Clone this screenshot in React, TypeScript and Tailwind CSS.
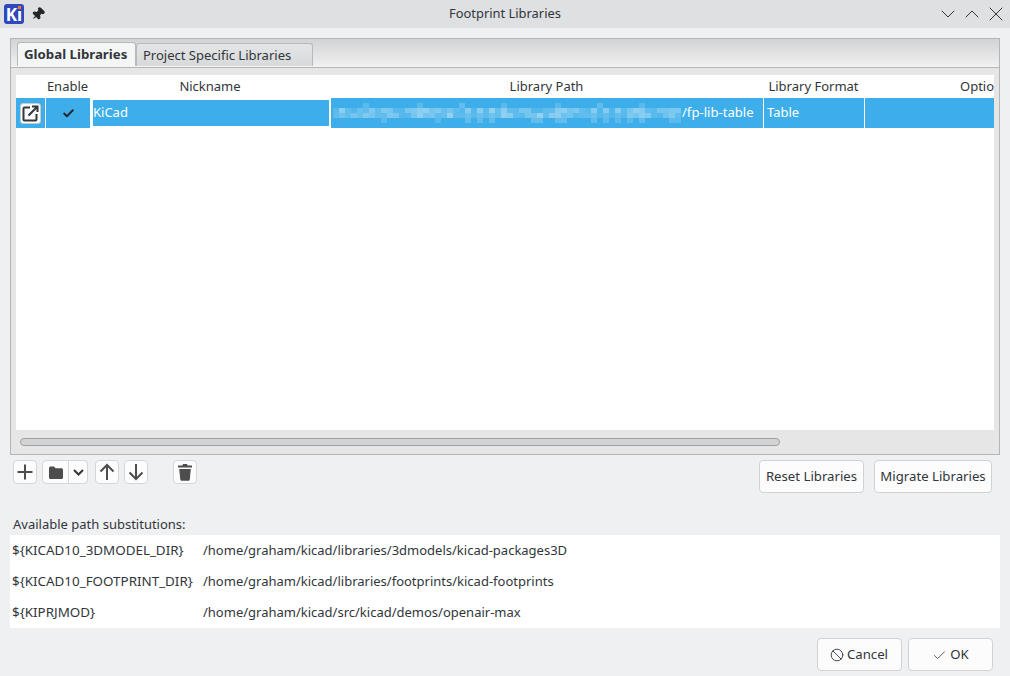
import { Ban, Check, ChevronDown, ChevronUp, X, Pin } from "lucide-react"

const columns = [
  { label: "", width: "w-[29px]" },
  { label: "Enable", width: "w-[45px]" },
  { label: "Nickname", width: "w-[240px]" },
  { label: "Library Path", width: "w-[433px]" },
  { label: "Library Format", width: "w-[101px]" },
]

const substitutions = [
  ["${KICAD10_3DMODEL_DIR}", "/home/graham/kicad/libraries/3dmodels/kicad-packages3D"],
  ["${KICAD10_FOOTPRINT_DIR}", "/home/graham/kicad/libraries/footprints/kicad-footprints"],
  ["${KIPRJMOD}", "/home/graham/kicad/src/kicad/demos/openair-max"],
]

const toolBtn = "flex h-6 items-center justify-center rounded-[4px] border border-[#d5d6d8] bg-[#fcfcfc]"
const textBtn = "flex h-[33px] items-center justify-center rounded-[4px] border border-[#d1d2d4] bg-[#fcfcfc] pt-px text-[13.2px]"

// the redacted part of the path: rough pixel blocks
function Redacted() {
  const blocks = []
  for (let i = 0; i < 58; i++) {
    for (let r = 0; r < 4; r++) {
      const n = (i * i * 29 + i * 47 + r * 71 + (i % 7) * r * 11) % 23
      const o = r === 1 || r === 2 ? 0.12 + n / 70 : n > 15 ? n / 110 : 0
      blocks.push(<rect key={i + "-" + r} x={i * 6} y={r * 5} width="6" height="5" fill="#ffffff" opacity={o} />)
    }
  }
  return (
    <svg width="349" height="20" className="shrink-0">
      {blocks}
    </svg>
  )
}

function OpenIcon() {
  return (
    <svg width="17" height="17" viewBox="0 0 17 17" fill="none" stroke="#31363b" strokeWidth="2">
      <path d="M8 2.5H2.5a1 1 0 0 0-1 1v11a1 1 0 0 0 1 1h11a1 1 0 0 0 1-1V9" />
      <path d="M6.5 10.5 15 2M10 1.5h5.5V7" />
    </svg>
  )
}

function PlusIcon() {
  return (
    <svg width="18" height="18" viewBox="0 0 18 18" stroke="#4d4d4d" strokeWidth="2">
      <path d="M9 1.5v15M1.5 9h15" />
    </svg>
  )
}

function FolderIcon() {
  return (
    <svg width="16" height="15" viewBox="0 0 16 15" fill="#4d4d4d">
      <path d="M1 3a1.5 1.5 0 0 1 1.5-1.5h3.4L7.6 3.2h6A1.5 1.5 0 0 1 15 4.7v7.8a1.5 1.5 0 0 1-1.5 1.5h-11A1.5 1.5 0 0 1 1 12.5z" />
    </svg>
  )
}

function SmallChevron() {
  return (
    <svg width="11" height="7" viewBox="0 0 11 7" fill="none" stroke="#31363b" strokeWidth="2">
      <path d="M1 1l4.5 4.5L10 1" />
    </svg>
  )
}

function ArrowIcon({ up }: { up: boolean }) {
  return (
    <svg width="16" height="18" viewBox="0 0 16 18" fill="none" stroke="#4d4d4d" strokeWidth="2">
      <path d={up ? "M8 17V2M1.5 8.5 8 2l6.5 6.5" : "M8 1v15M1.5 9.5 8 16l6.5-6.5"} />
    </svg>
  )
}

function TrashIcon() {
  return (
    <svg width="14" height="17" viewBox="0 0 14 17" fill="#4d4d4d">
      <path d="M5 0h4l.6 1.5H14V3.5H0V1.5h4.4z" />
      <path d="M1.2 5h11.6l-1 10.6a1.3 1.3 0 0 1-1.3 1.2h-6.9a1.3 1.3 0 0 1-1.3-1.2z" />
    </svg>
  )
}

export default function App() {
  return (
    <div className="flex h-[676px] w-[1010px] flex-col overflow-hidden bg-[#eff0f1] text-[13px] text-[#31363b] [font-family:'Noto_Sans',sans-serif]">
      {/* Title bar */}
      <div className="grid h-7 shrink-0 grid-cols-[1fr_auto_1fr] items-center bg-[#dee0e2] pl-1 pr-[2px]">
        <div className="flex items-center">
          <div className="relative flex h-5 w-5 items-center justify-center rounded-[3px] bg-[#2f49bd] text-[17px] font-bold leading-none text-white">
            Kı
            <span className="absolute right-[3px] top-[2px] h-[3px] w-[3px] bg-[#f2811d]" />
          </div>
          <Pin className="ml-[7px] h-[14px] w-[14px] rotate-45 fill-[#232629] text-[#232629]" />
        </div>
        <span className="pr-[2px] text-[12.9px]">Footprint Libraries</span>
        <div className="flex items-center justify-end">
          <ChevronDown className="h-6 w-6" strokeWidth={1} />
          <ChevronUp className="h-6 w-6" strokeWidth={1} />
          <X className="h-6 w-6" strokeWidth={1} />
        </div>
      </div>

      {/* Notebook */}
      <div className="mx-[10px] mt-[10px] flex h-[417px] shrink-0 flex-col border border-[#b4b5b6] bg-[#e6e6e6]">
        <div className="flex h-[27px] shrink-0 items-end bg-gradient-to-b from-[#d2d3d4] to-[#f0f0f1] pl-[6px]">
          <div className="flex h-[24px] w-[119px] items-center rounded-t-[3px] border border-b-0 border-[#b8b9ba] bg-[#f4f5f5] pl-[6px] pt-px text-[13.25px] font-bold">
            Global Libraries
          </div>
          <div className="flex h-[23px] w-[177px] items-center rounded-t-[3px] border border-b-0 border-[#b8b9ba] bg-gradient-to-b from-[#e4e5e6] to-[#d8d9da] pl-[6px] pt-px">
            Project Specific Libraries
          </div>
        </div>
        <div className="h-px shrink-0 bg-[#f4f5f5]" />
        <div className="flex min-h-0 flex-1 flex-col border-t border-[#b4b5b6] px-[5px] pt-[7px]">
          <div className="flex h-[355px] shrink-0 flex-col overflow-hidden bg-white">
            {/* Grid header */}
            <div className="flex h-[23px] shrink-0">
              {columns.map((c) => (
                <div key={c.label} className={c.width + " shrink-0 text-center leading-[23px]"}>
                  {c.label}
                </div>
              ))}
              <div className="flex-1 overflow-hidden whitespace-nowrap pl-[96px] leading-[23px]">Optio</div>
            </div>
            {/* Selected row */}
            <div className="flex h-[30px] shrink-0 gap-px bg-white text-white">
              <div className="flex w-[29px] shrink-0 items-center justify-center bg-[#3daee9]">
                <div className="flex h-[21px] w-[21px] items-center justify-center rounded-[3px] border border-[#c9cacc] bg-[#fcfcfc]">
                  <OpenIcon />
                </div>
              </div>
              <div className="flex w-[44px] shrink-0 items-center justify-center bg-[#3daee9]">
                <Check className="h-[13px] w-[13px] text-[#232629]" strokeWidth={3.5} />
              </div>
              <div className="ml-[2px] flex h-[26px] w-[236px] shrink-0 items-center self-center bg-[#3daee9]">KiCad</div>
              <div className="ml-px flex w-[432px] shrink-0 items-center overflow-hidden whitespace-nowrap bg-[#3daee9] pl-[2px]">
                <Redacted />
                <span className="text-[13.1px]">/fp-lib-table</span>
              </div>
              <div className="flex w-[100px] shrink-0 items-center bg-[#3daee9] pl-[3px]">Table</div>
              <div className="flex-1 bg-[#3daee9]" />
            </div>
          </div>
          {/* Scrollbar */}
          <div className="flex flex-1 items-center pl-1">
            <div className="h-[8px] w-[760px] rounded-full border border-[#a0a1a2] bg-[#d3d4d5]" />
          </div>
        </div>
      </div>

      {/* Toolbar */}
      <div className="mt-[5px] flex h-[33px] shrink-0 items-start pl-[13px] pr-[18px]">
        <button className={toolBtn + " w-6"}>
          <PlusIcon />
        </button>
        <button className={toolBtn + " ml-[5px] w-[27px] rounded-r-none"}>
          <FolderIcon />
        </button>
        <button className={toolBtn + " w-[19px] rounded-l-none border-l-0"}>
          <SmallChevron />
        </button>
        <button className={toolBtn + " ml-[7px] w-6"}>
          <ArrowIcon up />
        </button>
        <button className={toolBtn + " ml-[5px] w-6"}>
          <ArrowIcon up={false} />
        </button>
        <button className={toolBtn + " ml-[25px] w-6"}>
          <TrashIcon />
        </button>
        <div className="flex-1" />
        <button className={textBtn + " w-[105px]"}>Reset Libraries</button>
        <button className={textBtn + " ml-[10px] w-[118px]"}>Migrate Libraries</button>
      </div>

      {/* Path substitutions */}
      <div className="mt-[21px] h-[21px] shrink-0 pl-[13px] leading-[20px]">Available path substitutions:</div>
      <div className="mx-[10px] flex h-[93px] shrink-0 flex-col bg-white">
        {substitutions.map(([name, path]) => (
          <div key={name} className="flex h-[31px] items-center whitespace-nowrap pl-[2px]">
            <span className="w-[191px] shrink-0 text-[13.4px]">{name}</span>
            <span>{path}</span>
          </div>
        ))}
      </div>

      {/* Dialog buttons */}
      <div className="mt-[10px] flex justify-end gap-[6px] pr-[17px]">
        <button className={textBtn + " w-[85px] gap-[3px] pr-px"}>
          <Ban className="h-[14px] w-[14px]" strokeWidth={1.5} />
          Cancel
        </button>
        <button className={textBtn + " w-[85px] gap-[3px]"}>
          <Check className="h-[15px] w-[15px]" strokeWidth={1.25} />
          OK
        </button>
      </div>
    </div>
  )
}
